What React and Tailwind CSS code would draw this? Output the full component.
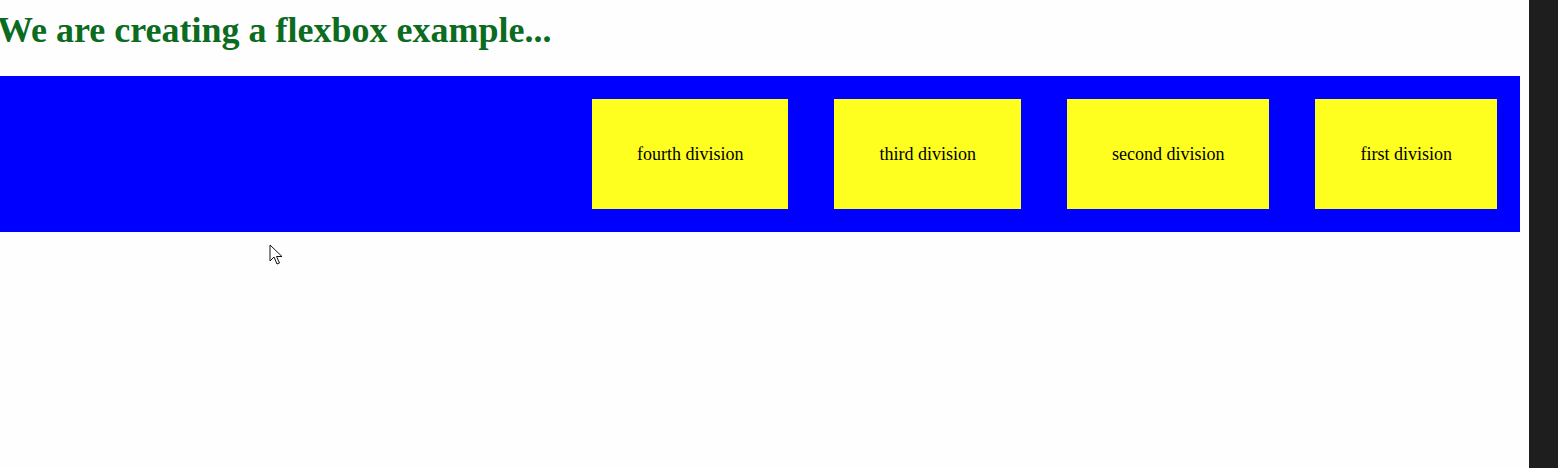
import React from "react";

const divisions = ["first division", "second division", "third division", "fourth division"];

function Cursor() {
  return (
    <svg
      className="absolute left-[269px] top-[244px]"
      width="14"
      height="22"
      viewBox="0 0 14 22"
    >
      <path
        d="M1 1 L1 17 L5 13 L8 20 L10.5 19 L7.5 12.5 L13 12.5 Z"
        fill="#fff"
        stroke="#111"
        strokeWidth="1"
        strokeLinejoin="round"
      />
    </svg>
  );
}

export default function App() {
  return (
    <div className="relative flex h-[468px] w-[1558px] overflow-hidden bg-[#fefefe] font-['Liberation_Serif',serif]">
      <div className="flex-1">
        <h1 className="ml-[-3px] mt-[10px] mb-[26px] text-[36px] font-bold leading-[40px] text-[#0b6b1f]">
          We are creating a flexbox example...
        </h1>
        <div className="mr-[9px] flex flex-row-reverse bg-[#0000ff]">
          {divisions.map((d) => (
            <div
              key={d}
              className="m-[23px] bg-[#ffff1f] px-[45px] py-[45px] text-[18px] leading-[20px] text-black"
            >
              {d}
            </div>
          ))}
        </div>
      </div>
      <div className="w-[29px] bg-[#1e1e1e]" />
      <Cursor />
    </div>
  );
}
